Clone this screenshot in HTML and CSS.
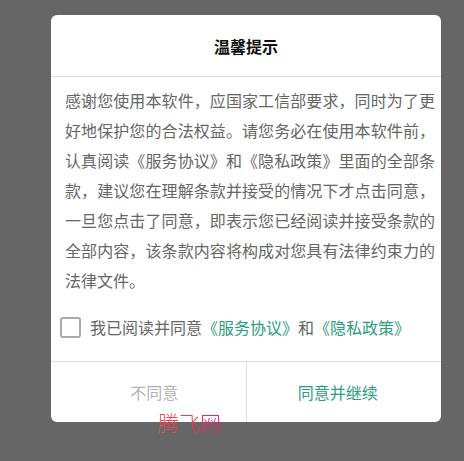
FILE: index.html
```html
<!DOCTYPE html>
<html lang="zh-CN">
<head>
<meta charset="utf-8">
<link rel="stylesheet" href="styles.css">
</head>
<body>
<div class="dialog">
  <div class="header">温馨提示</div>
  <div class="content">感谢您使用本软件，应国家工信部要求，同时为了更好地保护您的合法权益。请您务必在使用本软件前，认真阅读《服务协议》和《隐私政策》里面的全部条款，建议您在理解条款并接受的情况下才点击同意，一旦您点击了同意，即表示您已经阅读并接受条款的全部内容，该条款内容将构成对您具有法律约束力的法律文件。</div>
  <label class="agree">
    <span class="box"></span>
    <span class="agree-text">我已阅读并同意<span class="link">《服务协议》</span>和<span class="link">《隐私政策》</span></span>
  </label>
  <div class="footer">
    <div class="btn btn-no">不同意</div>
    <div class="btn btn-yes">同意并继续</div>
  </div>
</div>
<div class="watermark">腾飞网</div>
</body>
</html>
```
FILE: styles.css
```css
html, body {
  margin: 0;
  padding: 0;
}
body {
  background: #666666;
  width: 464px;
  height: 461px;
  overflow: hidden;
  position: relative;
  font-family: "Noto Sans CJK SC", "Noto Sans", sans-serif;
  padding-top: 15px;
  box-sizing: border-box;
}
.dialog {
  margin-left: 51px;
  width: 390px;
  height: 407px;
  background: #ffffff;
  border-radius: 6px;
  overflow: hidden;
  display: flex;
  flex-direction: column;
}
.header {
  height: 61px;
  border-bottom: 1px solid #dcdcdc;
  display: flex;
  align-items: center;
  justify-content: center;
  font-size: 16px;
  font-weight: bold;
  color: #111111;
}
.content {
  padding: 8px 6px 0 14px;
  font-size: 16px;
  line-height: 30px;
  color: #666666;
  text-align: justify;
}
.agree {
  display: flex;
  align-items: center;
  height: 21px;
  margin: 22px 0 23px 9px;
}
.box {
  width: 21px;
  height: 21px;
  box-sizing: border-box;
  border: 2px solid #aaaaaa;
  border-radius: 3px;
  flex: none;
}
.agree-text {
  margin-left: 9px;
  font-size: 16px;
  color: #666666;
  line-height: 21px;
}
.link {
  color: #2a9d7f;
}
.footer {
  flex: 1;
  display: flex;
  border-top: 1px solid #dcdcdc;
}
.btn {
  flex: 1;
  display: flex;
  align-items: center;
  justify-content: center;
  font-size: 16px;
}
.btn-no {
  color: #b3b3b3;
  padding-left: 12px;
}
.btn-yes {
  color: #2a9d7f;
  border-left: 1px solid #e0e0e0;
  padding-right: 12px;
}
.watermark {
  position: absolute;
  left: 158px;
  top: 408px;
  font-size: 21px;
  line-height: 28px;
  font-weight: 300;
  color: #f0304a;
  background: linear-gradient(90deg, #f25050, #f01c6a);
  -webkit-background-clip: text;
  background-clip: text;
  -webkit-text-fill-color: transparent;
}
```
